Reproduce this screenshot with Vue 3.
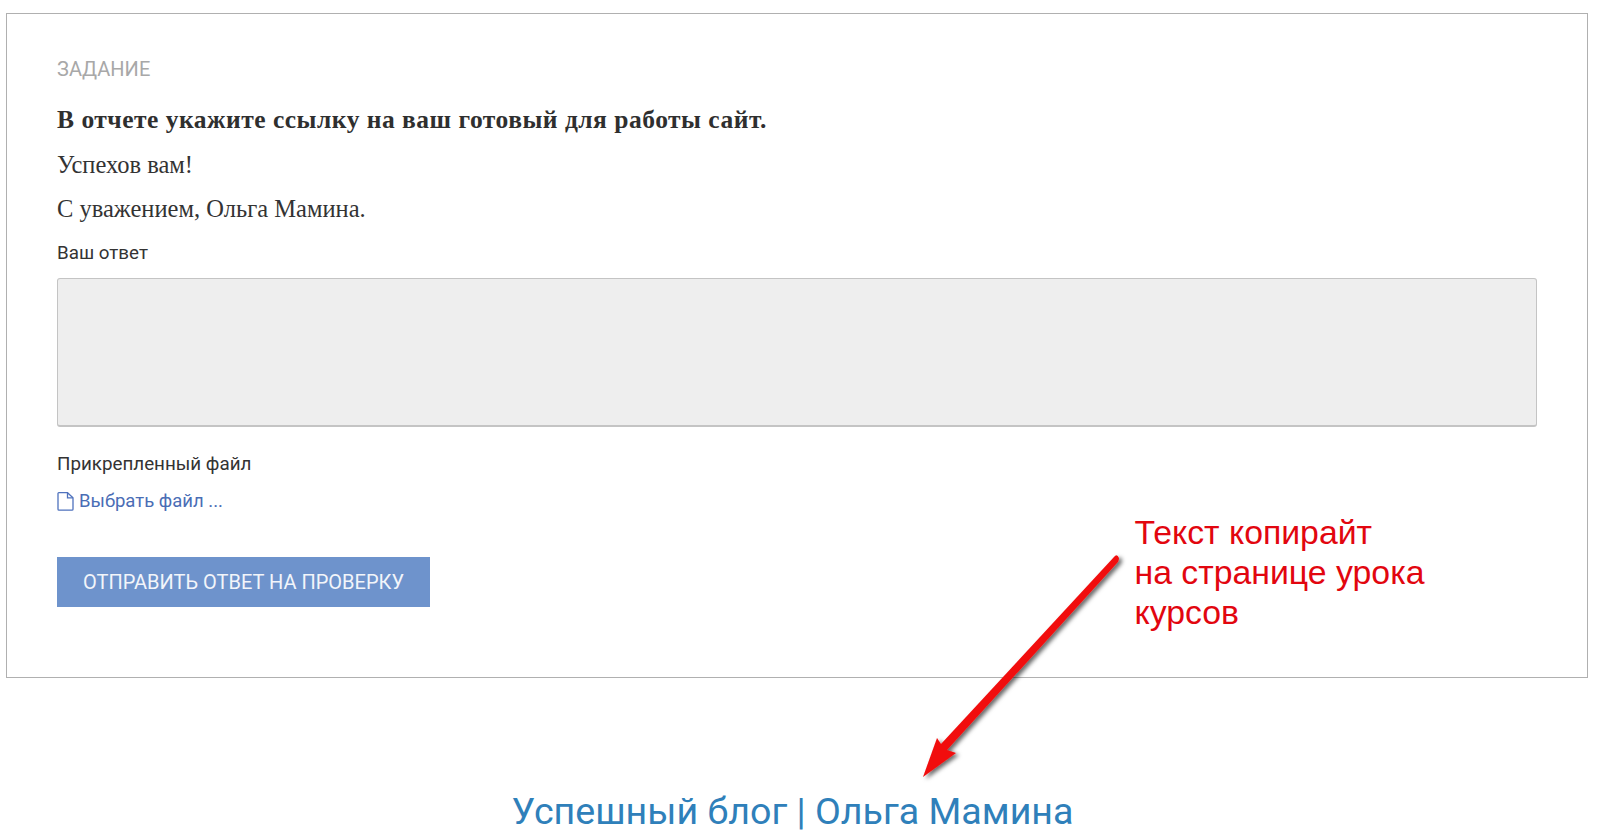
<template>
  <div class="page">
    <div class="card">
      <div class="caption">ЗАДАНИЕ</div>
      <p class="lead">В отчете укажите ссылку на ваш готовый для работы сайт.</p>
      <p class="para">Успехов вам!</p>
      <p class="para">С уважением, Ольга Мамина.</p>
      <label class="label" for="answer">Ваш ответ</label>
      <textarea id="answer" class="answer" disabled></textarea>
      <div class="label file-label">Прикрепленный файл</div>
      <a class="file-link" href="#" @click.prevent>
        <svg class="file-icon" width="17" height="19" viewBox="0 0 17 19" fill="none">
          <path d="M1 1.5C1 1 1.4 .7 1.8 .7H10.5L16 5.8V17.2C16 17.8 15.6 18.2 15 18.2H2C1.4 18.2 1 17.8 1 17.2Z" stroke="#4f72bd" stroke-width="1.3" />
          <path d="M10.5 .7V5.8H16" stroke="#4f72bd" stroke-width="1.3" />
        </svg>
        Выбрать файл ...
      </a>
      <button class="submit" type="button">ОТПРАВИТЬ ОТВЕТ НА ПРОВЕРКУ</button>
    </div>

    <div class="site-name">Успешный блог | Ольга Мамина</div>

    <div class="note">Текст копирайт<br />на странице урока<br />курсов</div>

    <svg class="arrow" width="1600" height="840" viewBox="0 0 1600 840">
      <defs>
        <filter id="arrow-shadow" x="-20%" y="-20%" width="140%" height="140%">
          <feDropShadow dx="3" dy="2" stdDeviation="2" flood-color="#000" flood-opacity="0.6" />
        </filter>
      </defs>
      <path
        d="M1114 557 Q1117 553 1119 558 Q1119 560 1118 562 L947 750 L956 753 L923 777 L937 738 L941 744 Z"
        fill="#f10d0d"
        filter="url(#arrow-shadow)"
      />
    </svg>
  </div>
</template>

<script setup>
</script>

<style>
html, body {
  margin: 0;
  background: #fff;
}
</style>

<style scoped>
.page {
  position: relative;
  width: 1600px;
  height: 840px;
  overflow: hidden;
  box-sizing: border-box;
  padding-top: 13px;
  font-family: Roboto, "Liberation Sans", sans-serif;
}

.card {
  box-sizing: border-box;
  height: 665px;
  margin: 0 12px 0 6px;
  padding: 42px 50px 0;
  border: 1px solid #b0b0b0;
  display: flex;
  flex-direction: column;
  align-items: flex-start;
}

.caption {
  font-size: 20px;
  line-height: 26px;
  color: #a8a8a8;
}

.lead {
  margin: 24px 0 0;
  font-family: "Liberation Serif", serif;
  font-size: 25.5px;
  font-weight: bold;
  letter-spacing: 0.5px;
  line-height: 28px;
  color: #2f2f2f;
}

.para {
  margin: 16.5px 0 0;
  font-family: "Liberation Serif", serif;
  font-size: 24.5px;
  line-height: 28px;
  color: #333;
}

.label {
  font-size: 18.8px;
  line-height: 22px;
  color: #333;
}

.para + .label {
  margin-top: 19px;
}

.answer {
  box-sizing: border-box;
  display: block;
  width: 100%;
  height: 149px;
  margin: 14px 0 0;
  padding: 0;
  background: #eee;
  border: 1px solid #c4c4c4;
  border-bottom-width: 2px;
  border-radius: 3px;
  resize: none;
}

.file-label {
  margin-top: 26px;
}

.file-link {
  display: flex;
  align-items: center;
  gap: 5px;
  margin-top: 15px;
  font-size: 18.5px;
  line-height: 22px;
  color: #4a6db5;
  text-decoration: none;
}

.submit {
  box-sizing: border-box;
  width: 373px;
  height: 50px;
  margin-top: 45px;
  padding: 0;
  border: none;
  background: #6e93cc;
  color: #f2f5fa;
  font-family: Roboto, "Liberation Sans", sans-serif;
  font-size: 20px;
}

.site-name {
  margin-top: 111px;
  padding-right: 15px;
  text-align: center;
  font-size: 37.6px;
  line-height: 44px;
  color: #2f80ba;
}

.note {
  position: absolute;
  left: 1134.5px;
  top: 512px;
  font-family: "Liberation Sans", sans-serif;
  font-size: 33.8px;
  line-height: 40px;
  color: #e2060f;
}

.arrow {
  position: absolute;
  left: 0;
  top: 0;
  pointer-events: none;
}
</style>
